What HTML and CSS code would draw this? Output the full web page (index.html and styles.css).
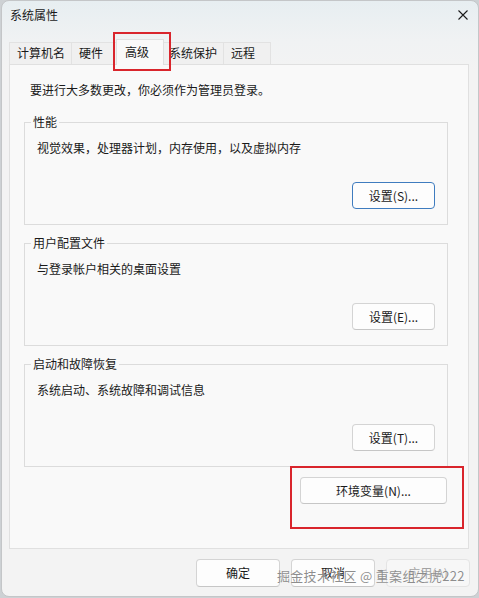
FILE: index.html
```html
<!DOCTYPE html>
<html lang="zh-CN">
<head>
<meta charset="utf-8">
<title>系统属性</title>
<link rel="stylesheet" href="styles.css">
</head>
<body>
<div class="window">
  <div class="titlebar">
    <span class="title">系统属性</span>
    <span class="close" aria-label="关闭">
      <svg width="10" height="10" viewBox="0 0 10 10"><path d="M0.5 0.5 L9.5 9.5 M9.5 0.5 L0.5 9.5" stroke="#1b1b1b" stroke-width="1.1" fill="none"/></svg>
    </span>
  </div>
  <div class="tabs">
    <div class="tab">计算机名</div>
    <div class="tab">硬件</div>
    <div class="tab tab-active">高级</div>
    <div class="tab">系统保护</div>
    <div class="tab">远程</div>
  </div>
  <div class="panel">
    <p class="note">要进行大多数更改，你必须作为管理员登录。</p>
    <fieldset class="group">
      <legend>性能</legend>
      <p class="desc">视觉效果，处理器计划，内存使用，以及虚拟内存</p>
      <div class="group-actions"><button class="btn btn-set btn-focus">设置(S)...</button></div>
    </fieldset>
    <fieldset class="group">
      <legend>用户配置文件</legend>
      <p class="desc">与登录帐户相关的桌面设置</p>
      <div class="group-actions"><button class="btn btn-set">设置(E)...</button></div>
    </fieldset>
    <fieldset class="group">
      <legend>启动和故障恢复</legend>
      <p class="desc">系统启动、系统故障和调试信息</p>
      <div class="group-actions"><button class="btn btn-set">设置(T)...</button></div>
    </fieldset>
    <div class="env-row"><button class="btn btn-env">环境变量(N)...</button></div>
  </div>
  <div class="footer">
    <button class="btn btn-dlg">确定</button>
    <button class="btn btn-dlg">取消</button>
    <button class="btn btn-dlg btn-disabled">应用(A)</button>
  </div>
  <div class="mark mark-tab"></div>
  <div class="mark mark-env"></div>
  <div class="watermark">掘金技术社区 @ 重案组之虎222</div>
</div>
</body>
</html>
```

FILE: styles.css
```css
html, body {
  margin: 0;
  padding: 0;
}
body {
  width: 479px;
  height: 598px;
  overflow: hidden;
  background: #cdd1d4;
  font-family: "Noto Sans CJK SC", "Noto Sans", sans-serif;
  font-size: 12px;
  color: #1a1a1a;
}
.window {
  position: relative;
  box-sizing: border-box;
  margin-left: 1px;
  width: 478px;
  height: 597px;
  border: 1px solid #c4c6c8;
  border-radius: 8px;
  overflow: hidden;
  background: linear-gradient(#e7eef1 0px, #f0f2f3 40px, #f3f3f3 70px);
}
.titlebar {
  height: 30px;
  box-sizing: border-box;
  display: flex;
  align-items: center;
  padding: 0 10px 2px 8px;
}
.title {
  line-height: 16px;
}
.close {
  margin-left: auto;
  width: 10px;
  height: 10px;
  display: block;
}
.close svg {
  display: block;
}
.tabs {
  height: 33px;
  box-sizing: border-box;
  display: flex;
  align-items: flex-end;
  padding-left: 7px;
}
.tab {
  box-sizing: border-box;
  height: 22px;
  min-width: 48px;
  padding: 0 6px 0 7px;
  line-height: 20px;
  border: 1px solid #e2e2e2;
  border-bottom: none;
  margin-right: -1px;
  background: #f0f0f0;
  white-space: nowrap;
}
.tab-active {
  position: relative;
  z-index: 1;
  height: 26px;
  line-height: 24px;
  margin: 0 -3px -1px -2px;
  padding-left: 8px;
  background: #f9f9f9;
  border-color: #e0e0e0;
}
.panel {
  box-sizing: border-box;
  height: 485px;
  margin: 0 9px 0 7px;
  padding: 17px 20px 0 14px;
  border: 1px solid #e0e0e0;
  background: #f9f9f9;
}
.note {
  margin: 0 0 16px 6px;
  line-height: 16px;
}
.group {
  margin: 0 0 10px 0;
  padding: 10px 12px 15px 6px;
  border: 1px solid #dcdcdc;
  min-width: 0;
}
.group legend {
  padding: 0 2px;
  line-height: 16px;
}
.desc {
  margin: 0;
  padding-left: 6px;
  line-height: 16px;
}
.group-actions {
  display: flex;
  justify-content: flex-end;
  margin-top: 26px;
}
.btn {
  box-sizing: border-box;
  font-family: "Noto Sans CJK SC", "Noto Sans", sans-serif;
  font-size: 12px;
  color: #1a1a1a;
  background: #fdfdfd;
  border: 1px solid #d4d4d4;
  border-bottom-color: #c6c6c6;
  border-radius: 4px;
  padding: 0;
  line-height: 16px;
}
.btn-set {
  width: 83px;
  height: 27px;
}
.btn-focus {
  border: 1px solid #3f7cbf;
}
.env-row {
  display: flex;
  justify-content: flex-end;
  margin-top: 7px;
  padding-right: 1px;
}
.btn-env {
  width: 147px;
  height: 27px;
}
.footer {
  display: flex;
  justify-content: flex-end;
  gap: 11px;
  margin-top: 10px;
  padding-right: 8px;
}
.btn-dlg {
  width: 84px;
  height: 28px;
}
.btn-disabled {
  color: #a3a3a3;
  background: #f7f7f7;
  border-color: #e4e4e4;
}
.mark {
  position: absolute;
  box-sizing: border-box;
  border: 2px solid #d9252c;
}
.mark-tab {
  left: 111px;
  top: 31px;
  width: 58px;
  height: 39px;
  z-index: 2;
}
.mark-env {
  left: 288px;
  top: 465px;
  width: 174px;
  height: 63px;
}
.watermark {
  position: absolute;
  left: 275px;
  top: 566px;
  font-size: 13px;
  letter-spacing: 0.3px;
  line-height: 17px;
  color: rgba(110, 110, 110, 0.78);
  text-shadow: 0 0 1px #ffffff;
  white-space: nowrap;
  z-index: 3;
}
```
